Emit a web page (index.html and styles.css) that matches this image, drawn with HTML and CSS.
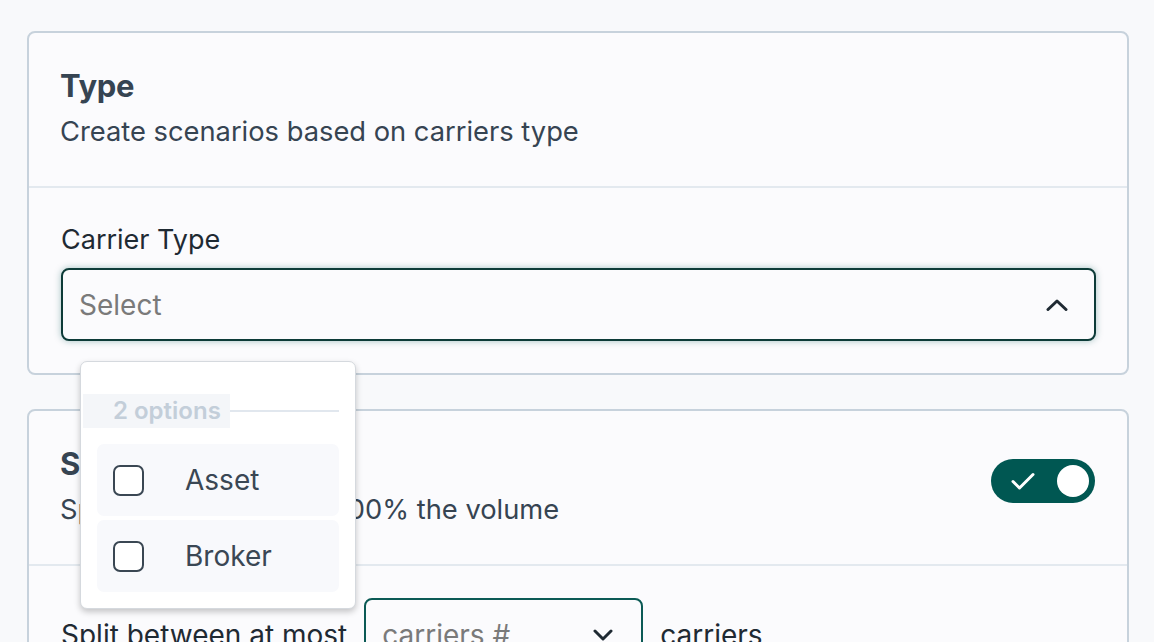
FILE: index.html
```html
<!DOCTYPE html>
<html lang="en">
<head>
    <meta charset="UTF-8">
    <meta name="viewport" content="width=device-width, initial-scale=1.0">
    <title>Scenario settings</title>
    <link rel="stylesheet" href="styles.css">
</head>
<body>
    <div class="page">
        <section class="card">
            <div class="card-header">
                <div class="card-title">
                    <h2>Type</h2>
                    <p>Create scenarios based on carriers type</p>
                </div>
            </div>
            <div class="card-body">
                <label class="field-label">Carrier Type</label>
                <div class="select-wrap">
                    <div class="select select-open">
                        <span class="placeholder">Select</span>
                        <svg class="chevron" width="22" height="12" viewBox="0 0 22 12">
                            <path d="M2 10.5 L11 2 L20 10.5" fill="none" stroke="#1f2a33" stroke-width="3" stroke-linecap="round" stroke-linejoin="round"/>
                        </svg>
                    </div>

                    <div class="dropdown">
                        <div class="group-head">
                            <span class="group-label">2 options</span>
                            <span class="group-line"></span>
                        </div>
                        <div class="option">
                            <span class="checkbox"></span>
                            <span>Asset</span>
                        </div>
                        <div class="option">
                            <span class="checkbox"></span>
                            <span>Broker</span>
                        </div>
                    </div>
                </div>
            </div>
        </section>

        <section class="card">
            <div class="card-header">
                <div class="card-title">
                    <h2>Split</h2>
                    <p>Split carriers at up to 100% the volume</p>
                </div>
                <div class="toggle">
                    <svg width="24" height="18" viewBox="0 0 24 18">
                        <path d="M2 9.5 L8.5 16 L22 2.5" fill="none" stroke="#fff" stroke-width="3" stroke-linecap="round" stroke-linejoin="round"/>
                    </svg>
                    <span class="knob"></span>
                </div>
            </div>
            <div class="card-body split-row">
                <span>Split between at most</span>
                <div class="select select-small">
                    <span class="placeholder">carriers #</span>
                    <svg class="chevron" width="20" height="12" viewBox="0 0 20 12">
                        <path d="M2 2 L10 10 L18 2" fill="none" stroke="#1f2a33" stroke-width="3" stroke-linecap="round" stroke-linejoin="round"/>
                    </svg>
                </div>
                <span>carriers</span>
            </div>
        </section>
    </div>
</body>
</html>
```

FILE: styles.css
```css
body {
    margin: 0;
    background-color: #f8f9fb;
    font-family: Inter, "Open Sans", Arial, sans-serif;
    color: #1f2a33;
    overflow: hidden;
}

.page {
    padding: 31px 25px 0 27px;
    display: flex;
    flex-direction: column;
    gap: 34px;
}

.card {
    background: #fbfbfd;
    border: 2px solid #c7d2dc;
    border-radius: 8px;
}

.card-header {
    display: flex;
    justify-content: space-between;
    align-items: flex-start;
    padding: 35px 31px 37px 31px;
    border-bottom: 2px solid #e3e9ef;
}

.card-title h2 {
    margin: 0;
    font-size: 31px;
    line-height: 36px;
    font-weight: 700;
    color: #364452;
    letter-spacing: -0.3px;
}

.card-title p {
    margin: 11px 0 0;
    font-size: 27.3px;
    line-height: 34px;
    color: #364452;
}

.card-body {
    padding: 35px 31px 32px 32px;
}

.field-label {
    display: block;
    font-size: 27px;
    line-height: 34px;
    margin-bottom: 11px;
}

.select-wrap {
    position: relative;
}

.select {
    display: flex;
    justify-content: space-between;
    align-items: center;
    height: 73px;
    box-sizing: border-box;
    padding: 0 26px 0 16px;
    border: 2px solid #0d3b38;
    border-radius: 8px;
    background: #fbfbfd;
    font-size: 28px;
}

.select-open {
    box-shadow: 0 0 7px rgba(0, 87, 82, 0.35);
}

.placeholder {
    color: #7a7a7a;
}

/* dropdown list that hangs over the next card */
.dropdown {
    position: absolute;
    left: 19px;
    top: 93px;
    width: 276px;
    box-sizing: border-box;
    padding: 32px 16px 16px 16px;
    background: #fff;
    border: 1px solid #d5d9de;
    border-radius: 7px;
    box-shadow: 0 3px 6px rgba(0, 0, 0, 0.22);
    z-index: 10;
}

.group-head {
    display: flex;
    align-items: center;
    margin-left: -14px;
    margin-bottom: 16px;
}

.group-label {
    background: #f4f6f9;
    padding: 0 9px 0 30px;
    font-size: 24px;
    line-height: 34px;
    font-weight: 600;
    color: #c3ced9;
}

.group-line {
    flex: 1;
    height: 2px;
    background: #e1e7ee;
}

.option {
    display: flex;
    align-items: center;
    gap: 41px;
    height: 72px;
    padding-left: 16px;
    background: #f8f9fc;
    border-radius: 7px;
    font-size: 28px;
    color: #3a4754;
    margin-bottom: 4px;
}

.option:last-child {
    margin-bottom: 0;
}

.checkbox {
    width: 31px;
    height: 31px;
    box-sizing: border-box;
    border: 2px solid #3a4753;
    border-radius: 7px;
    background: #fff;
}

.toggle {
    display: flex;
    align-items: center;
    justify-content: space-between;
    width: 104px;
    height: 44px;
    box-sizing: border-box;
    padding: 0 6px 0 20px;
    margin-top: 13px;
    margin-right: 1px;
    background: #005752;
    border-radius: 22px;
}

.knob {
    width: 32px;
    height: 32px;
    border-radius: 50%;
    background: #fff;
}

.split-row {
    display: flex;
    align-items: center;
    gap: 17px;
    padding-top: 32px;
    font-size: 28px;
}

.select-small {
    width: 279px;
    border-color: #0b5a55;
    padding-right: 28px;
}
```
